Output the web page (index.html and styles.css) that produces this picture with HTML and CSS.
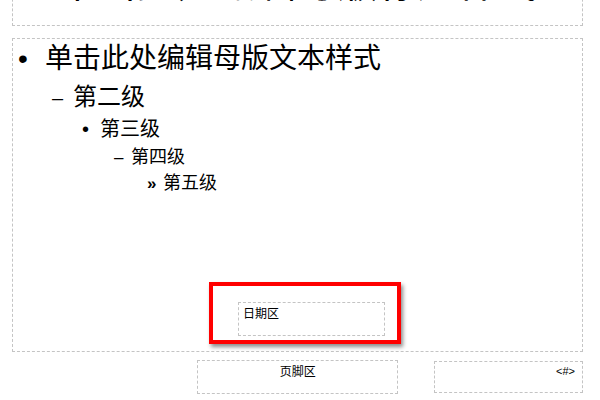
FILE: index.html
```html
<!DOCTYPE html>
<html lang="zh-CN">
<head>
<meta charset="utf-8">
<title>母版</title>
<link rel="stylesheet" href="styles.css">
</head>
<body>
<div class="slide">
  <div class="title">单击此处编辑母版标题样式</div>
  <div class="body">
    <div class="list">
      <div class="row l1"><span class="m">•</span><span class="t">单击此处编辑母版文本样式</span></div>
      <div class="row l2"><span class="m">–</span><span class="t">第二级</span></div>
      <div class="row l3"><span class="m">•</span><span class="t">第三级</span></div>
      <div class="row l4"><span class="m">–</span><span class="t">第四级</span></div>
      <div class="row l5"><span class="m">»</span><span class="t">第五级</span></div>
    </div>
    <div class="date">日期区</div>
    <div class="highlight"></div>
  </div>
  <div class="footrow">
    <div class="footer">页脚区</div>
    <div class="num">&lt;#&gt;</div>
  </div>
</div>
</body>
</html>
```
FILE: styles.css
```css
html, body {
  margin: 0;
  padding: 0;
  background: #ffffff;
  overflow: hidden;
}
body {
  font-family: "Noto Sans CJK SC", "Noto Sans", sans-serif;
  color: #000;
}
.slide {
  padding-left: 12px;
  width: 571px;
}
.title {
  margin-top: -50px;
  height: 74px;
  border: 1px dashed #c4c4c4;
  text-align: center;
  font-size: 40px;
  line-height: 58px;
  white-space: nowrap;
  overflow: hidden;
}
.body {
  position: relative;
  margin-top: 12px;
  height: 312px;
  border: 1px dashed #c4c4c4;
  display: flex;
  flex-direction: column;
}
.list {
  display: flex;
  flex-direction: column;
}
.row {
  display: flex;
  align-items: baseline;
  white-space: nowrap;
}
.m {
  font-family: "Liberation Sans", sans-serif;
  flex: none;
}
.l1 { padding-left: 5px; font-size: 28px; line-height: 34px; }
.l1 .m { width: 27px; }
.l2 { padding-left: 39px; font-size: 24px; line-height: 37px; }
.l2 .m { width: 21px; font-size: 20px; }
.l3 { padding-left: 69px; font-size: 20px; line-height: 21px; }
.l3 .m { width: 18px; }
.l4 { padding-left: 101px; font-size: 18px; line-height: 28px; margin-top: 1px; }
.l4 .m { width: 17px; font-size: 17px; }
.l5 { padding-left: 134px; font-size: 18px; line-height: 18px; }
.l5 .m { width: 16px; font-size: 17px; font-weight: bold; }
.date {
  margin: auto 0 15px 225px;
  width: 147px;
  height: 34px;
  box-sizing: border-box;
  border: 1px dashed #c4c4c4;
  font-size: 12px;
  line-height: 17px;
  padding: 1px 0 0 4px;
}
.highlight {
  position: absolute;
  left: 196px;
  top: 243px;
  width: 184px;
  height: 54px;
  border: 4px solid #ff0000;
  box-shadow: 2px 3px 4px rgba(0, 0, 0, 0.45);
}
.footrow {
  display: flex;
  align-items: flex-start;
  margin-top: 8px;
}
.footer {
  margin-left: 185px;
  width: 202px;
  height: 34px;
  box-sizing: border-box;
  border: 1px dashed #c4c4c4;
  text-align: center;
  font-size: 12px;
  line-height: 17px;
  padding-top: 1px;
}
.num {
  margin-left: 36px;
  margin-top: 1px;
  width: 149px;
  height: 32px;
  box-sizing: border-box;
  border: 1px dashed #c4c4c4;
  text-align: right;
  font-family: "Liberation Sans", sans-serif;
  font-size: 11px;
  line-height: 13px;
  padding: 3px 7px 0 0;
}
```
